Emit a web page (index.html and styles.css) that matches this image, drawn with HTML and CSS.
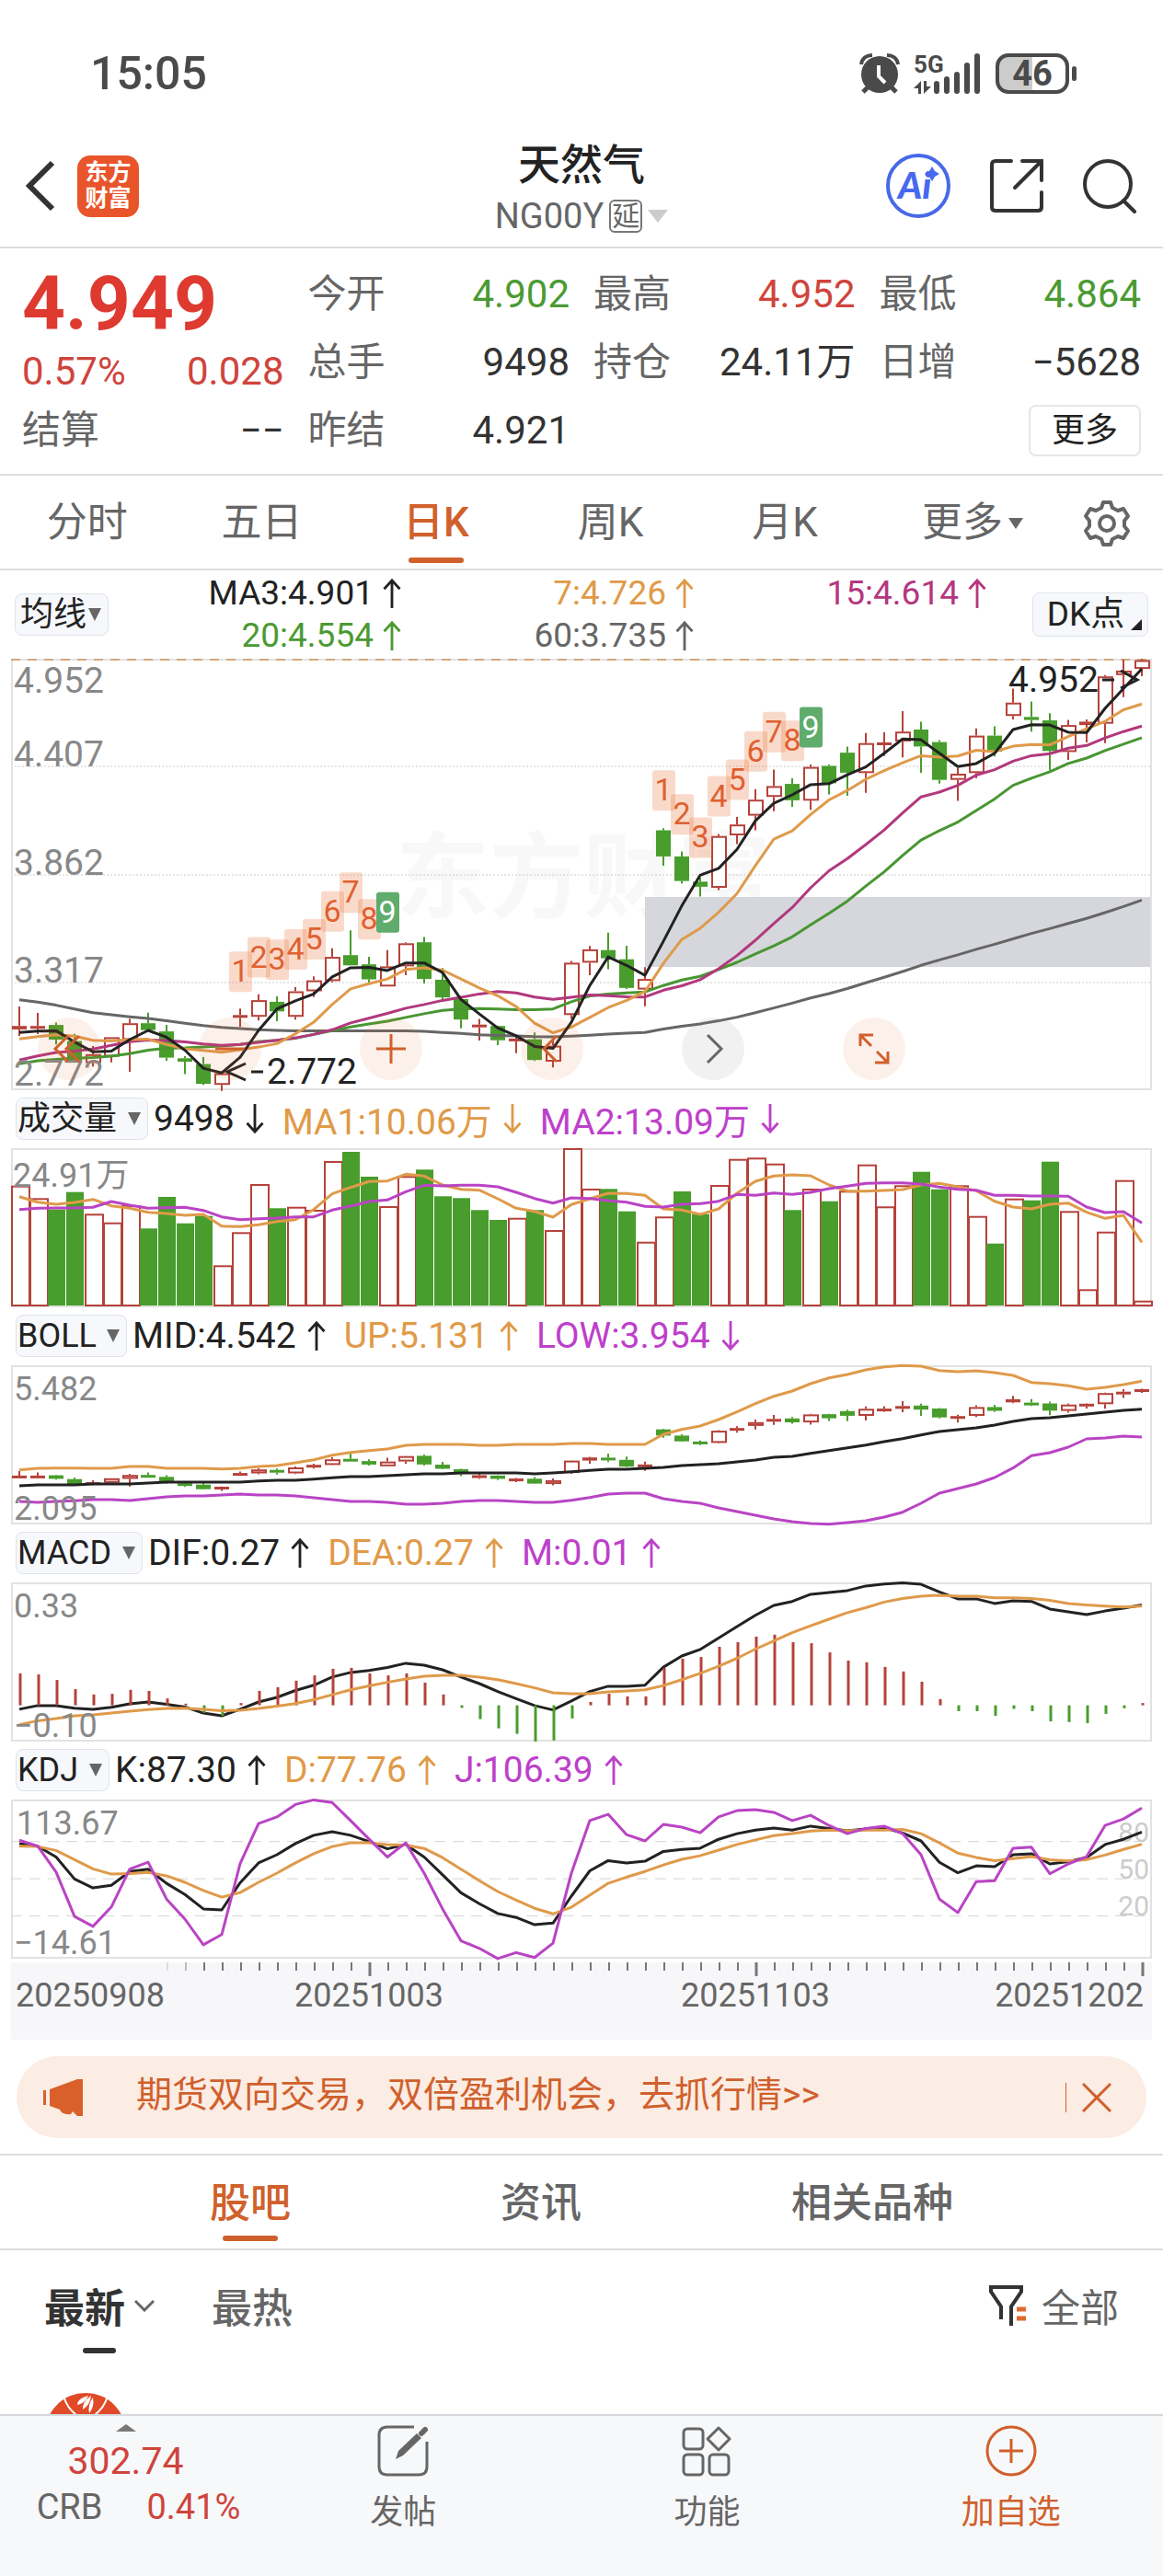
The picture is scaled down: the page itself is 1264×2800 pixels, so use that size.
FILE: index.html
```html
<!DOCTYPE html>
<html lang="zh-CN">
<head>
  <meta charset="utf-8">
  <meta name="viewport" content="width=device-width, initial-scale=1">
  <title>天然气 NG00Y</title>
  <link rel="stylesheet" href="styles.css">
</head>
<body>
  <svg class="defs" aria-hidden="true">
    <symbol id="up" viewBox="0 0 20 36"><path d="M10 35V3M1 13l9-10 9 10" fill="none" stroke="currentColor" stroke-width="3"/></symbol>
    <symbol id="down" viewBox="0 0 20 36"><path d="M10 1v32M1 23l9 10 9-10" fill="none" stroke="currentColor" stroke-width="3"/></symbol>
  </svg>

  <div class="status">
    <span class="time">15:05</span>
    <div class="status-icons">
      <svg width="44" height="46" viewBox="0 0 44 46">
        <circle cx="22" cy="24" r="20" fill="#4a4a4a"/>
        <path d="M2 13C3 6 8 3 14 3M42 13C41 6 36 3 30 3" fill="none" stroke="#4a4a4a" stroke-width="4"/>
        <path d="M10 37l-6 6M34 37l6 6" stroke="#4a4a4a" stroke-width="5"/>
        <path d="M21 14v12l7 7" fill="none" stroke="#fff" stroke-width="4"/>
      </svg>
      <svg width="74" height="46" viewBox="0 0 74 46">
        <text class="net" x="0" y="22">5G</text>
        <path d="M8 45V31L0 39h5v6zM11 31v14l8-8h-5v-6z" fill="#4a4a4a"/>
        <path d="M25 34v8M36 29v13M47 24v18M58 14v28M69 4v38" stroke="#4a4a4a" stroke-width="6" stroke-linecap="round"/>
      </svg>
      <div class="battery"><span>46</span></div>
    </div>
  </div>

  <header class="header">
    <div class="header-left">
      <a href="#" class="icon-link" aria-label="返回">
        <svg width="32" height="56" viewBox="0 0 32 56"><path d="M29 3L4 28l25 25" fill="none" stroke="#333" stroke-width="6"/></svg>
      </a>
      <a href="#" class="logo">东方<br>财富</a>
    </div>
    <button class="title">
      <span class="name">天然气</span>
      <span class="code">NG00Y<span class="delay">延</span><i class="tri tri-light"></i></span>
    </button>
    <div class="header-right">
      <button class="icon-link" aria-label="Ai">
        <svg width="72" height="72" viewBox="0 0 72 72">
          <circle cx="36" cy="36" r="33" fill="none" stroke="#4769e8" stroke-width="4"/>
          <text class="ai" x="14" y="50">Ai</text>
          <path d="M51 15l3 5 5 3-5 3-3 5-3-5-5-3 5-3z" fill="#4769f0"/>
        </svg>
      </button>
      <button class="icon-link" aria-label="分享">
        <svg width="60" height="60" viewBox="0 0 60 60"><path d="M24 3H7q-4 0-4 4v46q0 4 4 4h46q4 0 4-4V37M36 3h21v21M57 3L28 32" fill="none" stroke="#333" stroke-width="4" stroke-linecap="round"/></svg>
      </button>
      <button class="icon-link" aria-label="搜索">
        <svg width="60" height="60" viewBox="0 0 60 60"><circle cx="28" cy="28" r="25" fill="none" stroke="#333" stroke-width="4"/><path d="M45 46l12 12" stroke="#333" stroke-width="4" stroke-linecap="round"/></svg>
      </button>
    </div>
  </header>

  <section class="quote">
    <div class="last">
      <div class="price">4.949</div>
      <div class="change"><span>0.57%</span><span>0.028</span></div>
    </div>
    <div class="stat"><span>今开</span><b class="green">4.902</b></div>
    <div class="stat"><span>最高</span><b class="red">4.952</b></div>
    <div class="stat"><span>最低</span><b class="green">4.864</b></div>
    <div class="stat"><span>总手</span><b>9498</b></div>
    <div class="stat"><span>持仓</span><b>24.11万</b></div>
    <div class="stat"><span>日增</span><b>−5628</b></div>
    <div class="stat"><span>结算</span><b>−−</b></div>
    <div class="stat"><span>昨结</span><b>4.921</b></div>
    <button class="more">更多</button>
  </section>

  <nav class="periods">
    <a href="#">分时</a>
    <a href="#">五日</a>
    <a href="#" class="active">日K</a>
    <a href="#">周K</a>
    <a href="#">月K</a>
    <button class="period-more">更多<i class="tri tri-small"></i></button>
    <button aria-label="设置">
      <svg width="52" height="52" viewBox="0 0 52 52" fill="none" stroke="#666" stroke-width="4" stroke-linejoin="round">
        <path d="M22 3h8l2 6 6 3 6-2 5 8-4 5v6l4 5-5 8-6-2-6 3-2 6h-8l-2-6-6-3-6 2-5-8 4-5v-6l-4-5 5-8 6 2 6-3z"/>
        <circle cx="26" cy="26" r="8"/>
      </svg>
    </button>
  </nav>

  <main>
    <div class="ma-head">
      <label class="pick pick-tight"><select aria-label="主图指标"><option>均线</option></select></label>
      <div class="ma-values">
        <span class="black">MA3:4.901<svg class="arrow"><use href="#up"/></svg></span>
        <span class="orange">7:4.726<svg class="arrow"><use href="#up"/></svg></span>
        <span class="magenta">15:4.614<svg class="arrow"><use href="#up"/></svg></span>
        <span class="green">20:4.554<svg class="arrow"><use href="#up"/></svg></span>
        <span class="gray">60:3.735<svg class="arrow"><use href="#up"/></svg></span>
      </div>
      <button class="dk">DK点</button>
    </div>

    <div class="chart">
      <svg id="kline" viewBox="0 0 1240 468"></svg>
      <div class="chart-tools">
        <button aria-label="最左"><svg viewBox="0 0 68 68"><path d="M33 20L19 34l14 14M45 20L31 34l14 14"/></svg></button>
        <button aria-label="缩小"><svg viewBox="0 0 68 68"><path d="M18 34h32"/></svg></button>
        <button aria-label="放大"><svg viewBox="0 0 68 68"><path d="M18 34h32M34 18v32"/></svg></button>
        <button aria-label="左移"><svg viewBox="0 0 68 68"><path d="M39 20L25 34l14 14"/></svg></button>
        <button aria-label="右移" disabled><svg viewBox="0 0 68 68"><path d="M28 19l15 15-15 15"/></svg></button>
        <button aria-label="全屏"><svg viewBox="0 0 68 68"><path d="M19 31V19h14M19 19l12 12M49 37v12H35M49 49L37 37"/></svg></button>
      </div>
    </div>

    <div class="ind-head">
      <label class="pick"><select aria-label="副图一"><option>成交量</option></select></label>
      <span class="black">9498<svg class="arrow"><use href="#down"/></svg></span>
      <span class="orange">MA1:10.06万<svg class="arrow"><use href="#down"/></svg></span>
      <span class="purple">MA2:13.09万<svg class="arrow"><use href="#down"/></svg></span>
    </div>
    <div class="chart"><svg id="volume" viewBox="0 0 1240 172"></svg></div>

    <div class="ind-head">
      <label class="pick"><select aria-label="副图二"><option>BOLL</option></select></label>
      <span class="black">MID:4.542<svg class="arrow"><use href="#up"/></svg></span>
      <span class="orange">UP:5.131<svg class="arrow"><use href="#up"/></svg></span>
      <span class="purple">LOW:3.954<svg class="arrow"><use href="#down"/></svg></span>
    </div>
    <div class="chart"><svg id="boll" viewBox="0 0 1240 172"></svg></div>

    <div class="ind-head">
      <label class="pick"><select aria-label="副图三"><option>MACD</option></select></label>
      <span class="black">DIF:0.27<svg class="arrow"><use href="#up"/></svg></span>
      <span class="orange">DEA:0.27<svg class="arrow"><use href="#up"/></svg></span>
      <span class="purple">M:0.01<svg class="arrow"><use href="#up"/></svg></span>
    </div>
    <div class="chart"><svg id="macd" viewBox="0 0 1240 172"></svg></div>

    <div class="ind-head">
      <label class="pick"><select aria-label="副图四"><option>KDJ</option></select></label>
      <span class="black">K:87.30<svg class="arrow"><use href="#up"/></svg></span>
      <span class="orange">D:77.76<svg class="arrow"><use href="#up"/></svg></span>
      <span class="purple">J:106.39<svg class="arrow"><use href="#up"/></svg></span>
    </div>
    <div class="chart"><svg id="kdj" viewBox="0 0 1240 172"></svg></div>

    <div class="chart axis"><svg id="axis" viewBox="0 0 1240 82"></svg></div>
  </main>

  <div class="promo">
    <svg width="48" height="42" viewBox="0 0 48 42" fill="#d9602b"><path d="M1 13h3v16H1zM8 12l30-11V1h6v40h-6l-5-5-2 3q-10 1-12-5L8 30z"/></svg>
    <a href="#">期货双向交易，双倍盈利机会，去抓行情&gt;&gt;</a>
    <button aria-label="关闭"><svg width="32" height="32" viewBox="0 0 32 32"><path d="M1 1l30 30M31 1L1 31" stroke="#d0602c" stroke-width="3"/></svg></button>
  </div>

  <nav class="sections">
    <a href="#" class="active">股吧</a>
    <a href="#">资讯</a>
    <a href="#">相关品种</a>
  </nav>

  <div class="filters">
    <button class="sort active">最新<svg width="22" height="14" viewBox="0 0 22 14"><path d="M1 2l10 10L21 2" fill="none" stroke="#666" stroke-width="3"/></svg></button>
    <button class="sort">最热</button>
    <button class="all">
      <svg width="46" height="46" viewBox="0 0 46 46" fill="none" stroke="#333" stroke-width="4"><path d="M14 38V24L3 8V3h33v5L25 24v21"/><path d="M31 27h10M31 37h10" stroke="#e06a30" stroke-width="5"/></svg>
      全部
    </button>
  </div>

  <div class="feed">
    <svg width="88" height="88" viewBox="0 0 88 88">
      <circle cx="44" cy="44" r="44" fill="#e04a28"/>
      <path d="M21 6q3 10 13 18M67 6q-3 10-13 18" fill="none" stroke="#fff" stroke-width="2"/>
      <path d="M47 3Q35 6 35 13q9-2 12-10zM50 3Q40 10 41 18q8-5 9-15zM52 5q-6 8-4 17 6-7 4-17z" fill="#fff"/>
    </svg>
  </div>

  <footer class="tabbar">
    <button class="index">
      <i class="tri tri-up"></i>
      <span class="index-value">302.74</span>
      <span class="index-row"><span>CRB</span><span class="red">0.41%</span></span>
    </button>
    <button class="tab">
      <svg viewBox="0 0 56 56"><path d="M40 2H11q-9 0-9 9v34q0 9 9 9h34q9 0 9-9V18"/><path d="M20 37l3-9L43 9l5 5-20 19z" fill="#666" stroke="none"/><path d="M48 9l4-4" stroke-width="6" stroke-linecap="round"/></svg>
      发帖
    </button>
    <button class="tab">
      <svg viewBox="0 0 56 56"><rect x="3" y="4" width="21" height="22" rx="4"/><rect x="3" y="32" width="21" height="22" rx="4"/><rect x="31" y="32" width="21" height="22" rx="4"/><path d="M41 3l12 12-12 12-12-12z" stroke-linejoin="round"/></svg>
      功能
    </button>
    <button class="tab tab-add">
      <svg viewBox="0 0 56 56"><circle cx="28" cy="28" r="26"/><path d="M15 28h26M28 15v26"/></svg>
      加自选
    </button>
  </footer>

  <script src="charts.js"></script>
</body>
</html>
```

FILE: styles.css
```css
* {
  box-sizing: border-box;
}

body {
  margin: 0;
  background: #fff;
  color: #222;
  font-family: Roboto, "Noto Sans CJK SC", sans-serif;
  font-size: 38px;
}

button, select {
  margin: 0;
  padding: 0;
  border: 0;
  background: none;
  color: inherit;
  font: inherit;
}

a {
  color: inherit;
  text-decoration: none;
}

svg {
  display: block;
}

.defs {
  position: absolute;
  width: 0;
  height: 0;
}

.black { color: #222; }
.orange { color: #e09a48; }
.magenta { color: #b5367e; }
.purple { color: #bd40ca; }
.gray { color: #666; }
.green { color: #4a9a32; }
.red { color: #cf443c; }

.tri {
  display: inline-block;
  border: 8px solid transparent;
  border-bottom: 0;
  border-top: 14px solid #666;
}
.tri-light {
  border-width: 14px 11px 0;
  border-top-color: #ccc;
}
.tri-small {
  border-width: 12px 8px 0;
}
.tri-up {
  border-width: 0 11px 8px;
  border-bottom: 8px solid #777;
}

/* status bar */
.status {
  display: flex;
  align-items: center;
  justify-content: space-between;
  height: 150px;
  padding: 10px 102px 0 98px;
  color: #4a4a4a;
}
.time {
  font-size: 50px;
  font-weight: 500;
}
.status-icons {
  display: flex;
  align-items: center;
  gap: 15px;
}
.net {
  font-size: 26px;
  font-weight: 700;
  fill: #4a4a4a;
}
.battery {
  position: relative;
  width: 80px;
  height: 44px;
  border: 4px solid #4a4a4a;
  border-radius: 14px;
  background: linear-gradient(90deg, #ccc 50%, #fff 50%);
  line-height: 37px;
  text-align: center;
  font-weight: 700;
}
.battery::after {
  content: "";
  position: absolute;
  right: -12px;
  top: 10px;
  width: 5px;
  height: 16px;
  border-radius: 3px;
  background: #4a4a4a;
}

/* header */
.header {
  display: grid;
  grid-template-columns: 1fr auto 1fr;
  align-items: center;
  height: 120px;
  border-bottom: 2px solid #ddd;
}
.header-left, .header-right {
  display: flex;
  align-items: center;
  padding: 0 28px 14px;
}
.header-left {
  gap: 24px;
}
.header-right {
  justify-content: flex-end;
  gap: 41px;
}
.logo {
  width: 67px;
  height: 67px;
  padding-top: 5px;
  border-radius: 14px;
  background: #e9552a;
  color: #fff;
  font-size: 25px;
  font-weight: 700;
  line-height: 28px;
  text-align: center;
}
.title {
  display: flex;
  flex-direction: column;
  align-items: center;
  align-self: start;
}
.name {
  font-size: 46px;
  font-weight: 500;
  line-height: 58px;
}
.code {
  display: flex;
  align-items: center;
  gap: 6px;
  color: #666;
  line-height: 54px;
}
.delay {
  width: 36px;
  height: 36px;
  border: 2px solid #777;
  border-radius: 6px;
  font-size: 30px;
  line-height: 31px;
}
.ai {
  font-family: Lato, sans-serif;
  font-size: 40px;
  font-style: italic;
  font-weight: 900;
  fill: #4769f0;
}

/* quote */
.quote {
  display: grid;
  grid-template-columns: repeat(4, 1fr);
  grid-auto-rows: 74px;
  column-gap: 26px;
  padding: 13px 24px 10px;
  border-bottom: 2px solid #ddd;
  font-size: 42px;
}
.last {
  grid-row: span 2;
}
.price {
  height: 94px;
  color: #de3a30;
  font-size: 82px;
  font-weight: 700;
  line-height: 94px;
}
.change {
  display: flex;
  justify-content: space-between;
  color: #cf443c;
  line-height: 54px;
}
.stat {
  display: flex;
  justify-content: space-between;
  line-height: 74px;
  color: #666;
}
.stat b {
  color: #333;
  font-weight: 400;
}
.stat .green { color: #4a9a32; }
.stat .red { color: #cf443c; }
.more {
  grid-column: 4;
  justify-self: end;
  align-self: center;
  width: 122px;
  height: 56px;
  border: 2px solid #e6e6e6;
  border-radius: 8px;
  font-size: 36px;
  line-height: 50px;
}

/* period tabs */
.periods {
  display: grid;
  grid-template-columns: repeat(5, 15%) 1fr 122px;
  height: 103px;
  border-bottom: 2px solid #ddd;
  color: #666;
  font-size: 44px;
  line-height: 103px;
  text-align: center;
}
.periods button {
  display: flex;
  align-items: center;
  justify-content: center;
}
.periods .period-more {
  gap: 6px;
  padding-left: 24px;
}
.active {
  position: relative;
}
.periods .active, .sections .active {
  color: #d0602c;
  font-weight: 500;
}
.active::after {
  content: "";
  position: absolute;
  left: 50%;
  bottom: 8px;
  width: 60px;
  height: 6px;
  margin-left: -30px;
  border-radius: 3px;
  background: #d0602c;
}

/* indicator heads */
.ma-head {
  display: flex;
  align-items: center;
  height: 96px;
  padding: 0 16px;
  font-size: 37px;
}
.ma-values {
  display: grid;
  grid-template-columns: repeat(3, 1fr);
  flex: 1;
  margin-right: 50px;
  justify-items: end;
  line-height: 46px;
}
.ma-values span, .ind-head span {
  display: flex;
  align-items: center;
}
.arrow {
  width: 20px;
  height: 34px;
  margin-left: 12px;
}
.ma-values .arrow {
  margin-left: 10px;
}
.pick {
  position: relative;
  display: flex;
}
.pick::after {
  content: "";
  position: absolute;
  right: 8px;
  top: 16px;
  border: 7px solid transparent;
  border-top: 14px solid #666;
  border-bottom: 0;
  pointer-events: none;
}
.pick select {
  height: 46px;
  padding: 0 32px 0 1px;
  border: 1px solid #dfe3e8;
  border-radius: 8px;
  background: #f6f8fb;
  font-size: 36px;
  line-height: 44px;
  appearance: none;
}
.pick-tight select {
  padding: 0 22px 0 5px;
}
.dk {
  position: relative;
  width: 126px;
  height: 48px;
  padding-right: 10px;
  border: 1px solid #dfe3e8;
  border-radius: 8px;
  background: #f6f8fb;
  line-height: 44px;
}
.dk::after {
  content: "";
  position: absolute;
  right: 6px;
  bottom: 6px;
  border: 6px solid #222;
  border-top-color: transparent;
  border-left-color: transparent;
}
.ind-head {
  display: flex;
  align-items: center;
  gap: 20px;
  height: 64px;
  padding: 0 17px;
  font-size: 39px;
}
.ind-head .pick {
  margin-right: -14px;
}

/* charts */
.chart {
  position: relative;
  margin: 0 12px;
}
.chart > svg {
  width: 100%;
  height: auto;
  overflow: visible;
}
.axis {
  margin-top: 5px;
  padding-bottom: 2px;
  background: #f7f7f9;
}
.frame {
  fill: none;
  stroke: #e2e2e2;
  stroke-width: 2;
}
.grid-line {
  stroke: #ccc;
  stroke-dasharray: 2 2;
}
.grid-dash {
  stroke: #d4d4d4;
  stroke-width: 1;
  stroke-dasharray: 12 8;
}
.top-dash {
  stroke: #d2a878;
  stroke-width: 2;
  stroke-dasharray: 10 8;
}
.line {
  fill: none;
  stroke-width: 3;
  stroke-linejoin: round;
}
.label {
  font-size: 36px;
  fill: #888;
}
.label-big {
  font-size: 39px;
}
.label-dark {
  fill: #222;
}
.label-level {
  font-size: 30px;
  fill: #ccc;
}
.label-date {
  fill: #666;
}
.watermark {
  font-size: 102px;
  font-weight: 700;
  fill: #f8f8f8;
}
.badge {
  font-size: 34px;
  text-anchor: middle;
  fill: #df6030;
}
.badge-last {
  fill: #fff;
}
.chart-tools {
  position: absolute;
  left: 29px;
  bottom: 10px;
  display: flex;
  gap: 107px;
}
.chart-tools button {
  width: 68px;
  height: 68px;
  border-radius: 50%;
  background: rgba(222, 110, 50, 0.1);
}
.chart-tools button:disabled {
  background: rgba(140, 140, 140, 0.12);
}
.chart-tools path {
  fill: none;
  stroke: #d0602c;
  stroke-width: 3;
}
.chart-tools button:disabled path {
  stroke: #666;
}

/* promo */
.promo {
  display: flex;
  align-items: center;
  height: 89px;
  margin: 18px 18px 17px;
  padding: 0 38px 0 28px;
  border-radius: 45px;
  background: #fbece4;
  color: #d0602c;
  font-size: 39px;
  line-height: 85px;
}
.promo a {
  flex: 1;
  margin-left: 54px;
  padding-bottom: 4px;
}
.promo button {
  padding-left: 17px;
  border-left: 1px solid #d0602c;
}

/* forum */
.sections {
  display: flex;
  justify-content: space-evenly;
  height: 105px;
  border: solid #ddd;
  border-width: 2px 0;
  color: #666;
  font-size: 44px;
  font-weight: 500;
  line-height: 104px;
}
.filters {
  display: flex;
  align-items: center;
  gap: 62px;
  height: 119px;
  padding: 0 48px;
  color: #666;
}
.sort {
  display: flex;
  align-items: center;
  gap: 10px;
  height: 104px;
  font-size: 44px;
  font-weight: 500;
}
.sort.active {
  color: #333;
  font-weight: 700;
}
.sort.active::after {
  bottom: 0;
  width: 36px;
  margin-left: -18px;
  background: #333;
}
.all {
  display: flex;
  align-items: center;
  gap: 12px;
  margin-left: auto;
  font-size: 42px;
}
.feed {
  height: 120px;
  padding: 36px 49px 0;
}

/* bottom bar */
.tabbar {
  position: fixed;
  left: 0;
  right: 0;
  bottom: 0;
  display: grid;
  grid-template-columns: 273px repeat(3, 1fr);
  height: 176px;
  border-top: 2px solid #d5d9de;
  background: #f7f8fa;
}
.index {
  display: flex;
  flex-direction: column;
  align-items: center;
  padding-top: 9px;
  line-height: 50px;
}
.index-value {
  margin-top: 7px;
  color: #cf443c;
  font-size: 41px;
}
.index-row {
  display: flex;
  gap: 48px;
  padding-left: 28px;
  color: #666;
}
.index-row .red {
  color: #cf443c;
}
.tab {
  display: flex;
  flex-direction: column;
  align-items: center;
  gap: 12px;
  padding-top: 10px;
  color: #666;
  font-size: 36px;
  line-height: 54px;
}
.tab svg {
  width: 56px;
  height: 56px;
  fill: none;
  stroke: #666;
  stroke-width: 3;
}
.tab-add {
  color: #d0602c;
}
.tab-add svg {
  stroke: #d0602c;
}
```

FILE: charts.js
```js
const RED = '#b5423a';
const GREEN = '#489d2c';
const ORANGE = '#df9a4a';
const PURPLE = '#b944c4';
const BLACK = '#222';

const STEP = 20;
const x = i => 9 + i * STEP;

// high, body top, body bottom, low, up day
const candles = [
  [1284,1341,1351,1370,1],[1303,1341,1344,1365,1],[1331,1338,1381,1395,0],[1364,1385,1449,1449,0],
  [1400,1424,1450,1460,1],[1374,1374,1431,1448,1],[1320,1333,1382,1476,1],[1302,1333,1353,1353,0],
  [1338,1357,1434,1443,0],[1430,1436,1446,1482,0],[1432,1453,1511,1514,0],[1478,1480,1514,1532,1],
  [1290,1309,1317,1344,1],[1248,1265,1314,1325,1],[1254,1270,1298,1327,0],[1227,1239,1314,1322,1],
  [1195,1207,1239,1256,1],[1113,1138,1209,1213,1],[1060,1133,1163,1163,0],[1138,1160,1204,1218,0],
  [1118,1166,1225,1225,1],[1095,1098,1166,1192,1],[1080,1095,1203,1216,0],[1171,1205,1257,1262,0],
  [1255,1262,1322,1348,0],[1320,1337,1343,1384,1],[1340,1341,1383,1397,0],[1370,1378,1384,1421,1],
  [1360,1380,1441,1444,0],[1378,1399,1446,1463,1],[1150,1155,1309,1320,1],[1106,1116,1155,1192,1],
  [1067,1118,1142,1174,0],[1105,1145,1229,1232,0],[1168,1203,1234,1283,1],[760,766,843,870,0],
  [828,843,915,922,0],[905,917,932,961,0],[777,783,935,942,1],[727,749,781,807,1],
  [645,676,723,766,1],[588,636,668,710,1],[613,630,678,697,0],[573,580,679,706,1],
  [573,577,628,661,0],[520,538,597,665,0],[480,510,598,656,1],[478,508,514,548,1],
  [416,476,505,552,1],[447,470,520,597,0],[501,507,618,629,0],[584,600,618,680,1],
  [467,488,598,613,1],[461,488,535,549,0],[350,391,430,440,1],[388,433,442,476,0],
  [422,443,533,590,0],[442,457,536,559,1],[440,447,457,508,1],[310,314,453,510,1],
  [265,297,310,375,1],[262,266,292,313,1]
];

const ma3 = [1360,1356,1355,1388,1417,1415,1381,1354,1374,1412,1465,1479,1433,1354,1291,1267,1247,1197,1170,1169,1178,1156,1156,1184,1263,1306,1347,1370,1401,1407,1330,1222,1138,1163,1192,1092,988,898,878,822,738,687,662,632,629,603,580,540,498,500,540,579,570,540,470,456,457,478,479,408,350,292];
const ma7 = [1379,1372,1367,1371,1383,1385,1381,1380,1395,1408,1413,1418,1411,1403,1393,1364,1330,1278,1232,1217,1203,1175,1170,1177,1203,1229,1252,1284,1333,1361,1344,1316,1287,1266,1240,1157,1087,1054,1007,952,870,792,768,720,677,649,616,591,568,547,551,548,531,535,519,514,515,491,468,446,412,395];
const ma15 = [1441,1429,1419,1415,1409,1398,1387,1382,1384,1388,1394,1398,1395,1389,1383,1376,1366,1352,1332,1318,1304,1289,1278,1266,1257,1247,1240,1244,1256,1263,1257,1250,1252,1255,1256,1236,1223,1205,1173,1134,1089,1040,993,935,885,849,808,765,715,668,654,634,604,588,563,547,541,525,517,495,476,460];
const ma20 = [1452,1443,1439,1436,1434,1430,1422,1412,1406,1405,1403,1400,1395,1387,1383,1377,1366,1355,1344,1335,1327,1316,1305,1295,1291,1290,1291,1293,1293,1291,1270,1253,1247,1244,1241,1222,1206,1195,1175,1154,1129,1106,1079,1044,1010,974,930,888,840,795,767,742,708,674,634,613,594,570,554,532,513,494];
const ma60 = [1264,1271,1280,1291,1302,1308,1314,1319,1326,1333,1340,1345,1349,1352,1354,1355,1355,1355,1355,1355,1355,1355,1357,1360,1363,1367,1369,1370,1372,1373,1371,1368,1365,1362,1360,1350,1342,1335,1326,1315,1302,1288,1274,1259,1246,1231,1214,1198,1181,1163,1147,1132,1116,1101,1085,1069,1055,1040,1025,1008,990,971];

const volumes = [300,341,378,321,392,420,364,440,337,423,399,560,452,295,374,369,379,220,190,271,367,269,248,335,341,380,412,405,380,445,178,310,311,384,483,401,319,393,298,213,209,228,380,310,351,317,231,368,299,255,312,299,399,489,342,348,222,383,638,450,282,675];
const volumeDown = [2,3,7,8,9,10,14,18,19,22,23,24,25,26,28,32,33,36,37,42,44,49,50,53,55,56];
const volMa1 = [336,354,361,355,345,366,374,387,391,397,394,432,434,428,417,411,378,327,306,287,285,263,269,298,312,315,343,374,384,403,362,343,325,326,332,376,380,394,376,325,286,269,265,268,298,318,318,316,313,298,293,304,317,351,370,376,361,357,387,407,397,485];
const volMa2 = [378,374,373,373,371,352,364,374,372,371,381,402,411,408,406,402,402,380,367,352,347,320,299,301,299,299,304,322,342,357,340,342,349,354,368,370,361,359,351,329,332,324,329,322,310,302,293,291,291,295,305,312,315,332,332,334,334,335,370,388,385,422];

const bollUp = [1226,1221,1220,1220,1221,1221,1215,1215,1221,1221,1221,1223,1221,1215,1212,1203,1193,1178,1169,1163,1158,1146,1143,1143,1143,1146,1146,1143,1143,1143,1140,1140,1143,1143,1143,1110,1094,1083,1062,1037,1010,986,969,945,926,915,900,890,886,888,902,906,903,909,918,941,945,952,963,957,948,937];
const bollMid = [1278,1275,1275,1275,1272,1272,1272,1269,1266,1266,1266,1266,1266,1262,1260,1260,1256,1252,1248,1248,1245,1242,1239,1239,1236,1236,1236,1236,1239,1236,1232,1228,1224,1224,1221,1218,1212,1209,1206,1200,1194,1185,1182,1172,1163,1154,1145,1134,1124,1112,1101,1095,1089,1080,1068,1059,1056,1050,1044,1038,1032,1028];
const bollLow = [1329,1332,1329,1327,1323,1323,1326,1320,1314,1311,1311,1308,1305,1308,1308,1311,1317,1323,1329,1329,1332,1338,1338,1335,1329,1326,1326,1329,1332,1332,1325,1316,1305,1302,1302,1320,1329,1335,1350,1362,1374,1386,1395,1401,1403,1398,1392,1380,1364,1335,1302,1287,1272,1251,1220,1180,1170,1152,1125,1122,1116,1119];

const macdBars = [448,451,468,496,512,510,498,501,524,540,568,577,538,501,490,470,454,434,431,448,454,448,476,512,553,587,615,632,655,652,585,535,510,518,518,431,403,398,367,353,336,330,353,356,384,409,414,428,442,473,526,563,563,577,556,563,594,596,599,571,554,538];
const dif = [557,546,546,554,557,551,541,535,542,550,569,577,557,535,521,500,484,459,445,439,430,417,423,437,459,479,503,525,546,559,532,503,487,487,484,429,395,375,340,305,271,241,229,207,202,196,182,176,172,177,200,221,221,235,227,229,252,261,269,258,249,240];
const dea = [604,592,585,577,574,569,563,558,555,554,557,562,560,555,548,540,528,513,498,486,475,465,457,454,454,459,467,479,492,507,510,510,504,501,498,485,467,448,426,402,374,349,324,303,283,263,248,231,220,213,210,213,213,218,218,220,226,235,240,243,246,243];

const kLine = [965,973,1006,1073,1100,1092,1050,1043,1086,1120,1164,1167,1084,1024,999,965,940,929,940,959,981,968,1006,1060,1115,1148,1178,1190,1212,1207,1125,1048,1017,1024,1019,989,983,979,952,935,924,918,924,912,919,926,921,917,933,957,1022,1054,1033,1035,999,996,1027,1020,1007,968,952,930];
const dLine = [973,974,986,1014,1042,1058,1056,1053,1063,1083,1108,1128,1114,1083,1055,1024,996,974,963,963,968,970,980,1008,1043,1078,1111,1137,1162,1179,1159,1122,1086,1067,1050,1030,1013,1002,985,968,954,941,935,927,924,926,924,924,922,935,963,994,1007,1017,1011,1005,1014,1018,1014,1000,983,967];
const jLine = [955,973,1052,1187,1217,1158,1043,1022,1134,1195,1273,1242,1026,904,884,846,832,840,895,951,1006,963,1055,1164,1261,1284,1315,1297,1312,1268,1055,895,876,938,957,907,915,932,884,865,862,870,895,879,910,935,919,912,935,999,1134,1175,1081,1078,979,976,1057,1027,1005,910,890,857];

// plot scale: value at the top edge, units per pixel
const scale = (top, unit) => v => Math.round((v - top) / unit * 10) / 10;

function line(values, y, color) {
  const points = values.map((v, i) => `${x(i)},${y(v)}`).join(' ');
  return `<polyline class="line" points="${points}" stroke="${color}"/>`;
}

function frame(h) {
  return `<rect class="frame" x="1" y="1" width="1238" height="${h - 1}"/>`;
}

function label(text, px, py, cls = '') {
  return `<text class="label ${cls}" x="${px}" y="${py}">${text}</text>`;
}

function drawCandles(y) {
  return candles.map(([hi, top, bottom, lo, up], i) => {
    const color = up ? RED : GREEN;
    const a = y(top), b = y(bottom);
    const h = Math.max(b - a, 3);
    let s = `<path d="M${x(i)} ${y(hi)}V${a}M${x(i)} ${a + h}V${Math.max(y(lo), a + h)}" stroke="${color}" stroke-width="2"/>`;
    if (up && h > 4) {
      s += `<rect x="${x(i) - 7}" y="${a + 1}" width="15" height="${h - 2}" fill="#fff" stroke="${color}" stroke-width="2"/>`;
    } else {
      s += `<rect x="${x(i) - 8}" y="${a}" width="16" height="${h}" fill="${color}"/>`;
    }
    return s;
  }).join('');
}

function badges(start, tops, y) {
  return tops.map((top, n) => {
    const px = x(start + n), py = y(top), last = n === 8;
    return `<rect x="${px - 12}" y="${py}" width="25" height="44" rx="3" fill="${last ? '#5fac6c' : 'rgba(232,120,60,0.27)'}"/>
      <text class="badge ${last ? 'badge-last' : ''}" x="${px}" y="${py + 33}">${n + 1}</text>`;
  }).join('');
}

function drawKline() {
  const y = scale(262, 2.703);
  let s = '<text class="watermark" x="418" y="274">东方财富</text>';
  s += [117, 235, 352].map(g => `<line class="grid-line" x1="0" x2="1240" y1="${g}" y2="${g}"/>`).join('');
  s += '<rect x="689" y="259" width="550" height="76" fill="#d5d7dc"/>';
  s += frame(468) + '<line class="top-dash" x1="0" x2="1240" y1="1" y2="1"/>';
  s += drawCandles(y);
  s += line(ma60, y, '#666') + line(ma20, y, '#489632') + line(ma15, y, '#b2387d') + line(ma7, y, ORANGE) + line(ma3, y, BLACK);
  s += badges(12, [1122,1080,1087,1057,1027,945,890,968,948], y);
  s += badges(35, [590,660,728,607,558,475,418,444,404], y);
  s += label('4.952', 3, 37, 'label-big') + label('4.407', 3, 117, 'label-big') + label('3.862', 3, 235, 'label-big');
  s += label('3.317', 3, 352, 'label-big') + label('2.772', 3, 464, 'label-big');
  s += '<path d="M255 440l-20 9 20 9M261 449h13" fill="none" stroke="#222" stroke-width="3"/>' + label('2.772', 278, 462, 'label-big label-dark');
  s += label('4.952', 1084, 36, 'label-big label-dark') + '<path d="M1186 23h13M1206 13l18 10-18 9" fill="none" stroke="#222" stroke-width="3"/>';
  return s;
}

function drawVolume() {
  const y = scale(178, 3);
  let s = frame(172);
  volumes.forEach((v, i) => {
    const a = y(v);
    if (volumeDown.includes(i)) {
      s += `<rect x="${x(i) - 9}" y="${a}" width="19" height="${171 - a}" fill="${GREEN}"/>`;
    } else {
      s += `<rect x="${x(i) - 8}" y="${a + 1}" width="19" height="${170 - a}" fill="#fff" stroke="${RED}" stroke-width="2"/>`;
    }
  });
  return s + label('24.91万', 2, 42) + line(volMa1, y, ORANGE) + line(volMa2, y, PURPLE);
}

function drawBoll() {
  const y = scale(885, 3);
  return frame(172) + drawCandles(v => y(893.3 + 0.262 * v))
    + line(bollMid, y, BLACK) + line(bollUp, y, ORANGE) + line(bollLow, y, PURPLE)
    + label('5.482', 3, 38) + label('2.095', 3, 168);
}

function drawMacd() {
  const y = scale(171, 2.8);
  const zero = y(545);
  const bars = macdBars.map((v, i) =>
    `<line x1="${x(i) + 1}" x2="${x(i) + 1}" y1="${zero}" y2="${y(v)}" stroke="${v < 545 ? RED : GREEN}" stroke-width="3"/>`).join('');
  return frame(172) + line(dif, y, BLACK) + bars + line(dea, y, ORANGE)
    + label('0.33', 3, 38) + label('−0.10', 3, 168);
}

function drawKdj() {
  const y = scale(831, 2.8);
  const levels = [[959, 80], [1072, 50], [1185, 20]].map(([v, t]) =>
    `<line class="grid-dash" x1="0" x2="1240" y1="${y(v)}" y2="${y(v)}"/>
     <text class="label label-level" x="1237" y="${y(v)}" text-anchor="end">${t}</text>`).join('');
  return frame(172) + levels + line(kLine, y, BLACK) + line(dLine, y, ORANGE) + line(jLine, y, PURPLE)
    + label('113.67', 6, 38) + label('−14.61', 3, 168);
}

function drawAxis() {
  const major = [19, 40, 61];
  let s = '';
  for (let i = 8; i < 62; i++) {
    const big = major.includes(i);
    const color = i === 8 ? '#ddd' : i === 9 ? '#bbb' : '#777';
    s += `<line x1="${x(i) + 1}" x2="${x(i) + 1}" y1="0" y2="${big ? 15 : 9}" stroke="${color}" stroke-width="${big ? 3 : 2}"/>`;
  }
  return s + '<text class="label label-date" x="5" y="48">20250908</text>'
    + `<text class="label label-date" x="${x(19)}" y="48" text-anchor="middle">20251003</text>`
    + `<text class="label label-date" x="${x(40)}" y="48" text-anchor="middle">20251103</text>`
    + '<text class="label label-date" x="1231" y="48" text-anchor="end">20251202</text>';
}

document.getElementById('kline').innerHTML = drawKline();
document.getElementById('volume').innerHTML = drawVolume();
document.getElementById('boll').innerHTML = drawBoll();
document.getElementById('macd').innerHTML = drawMacd();
document.getElementById('kdj').innerHTML = drawKdj();
document.getElementById('axis').innerHTML = drawAxis();
```
